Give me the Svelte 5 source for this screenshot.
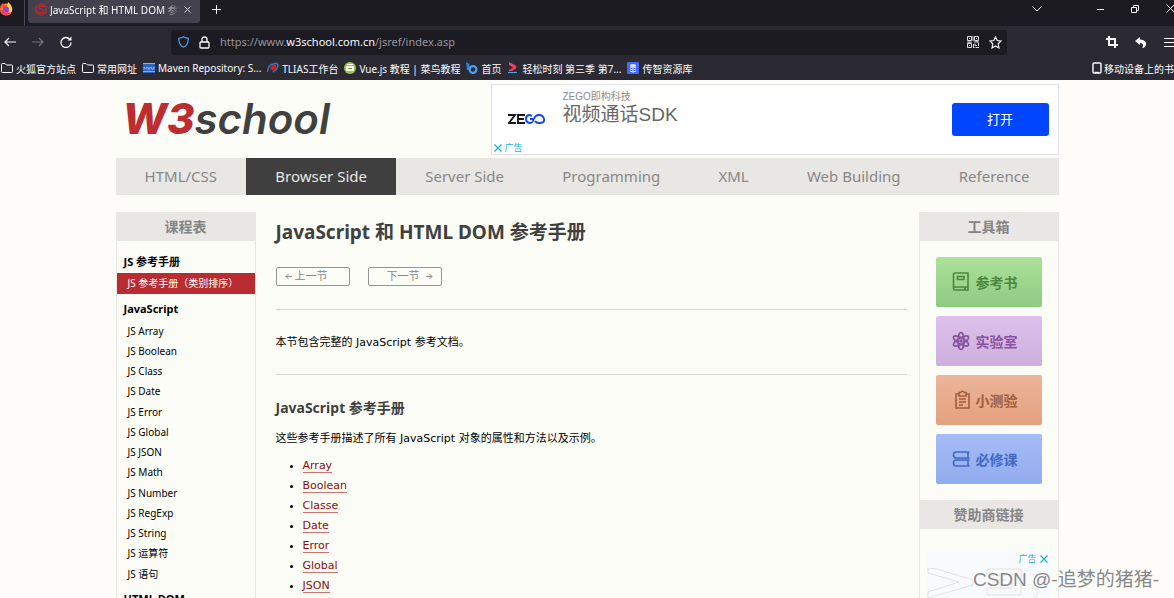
<script lang="ts">
  let url = 'https://www.w3school.com.cn/jsref/index.asp';

  const bookmarks = [
    { icon: 'folder', text: '火狐官方站点' },
    { icon: 'folder', text: '常用网址' },
    { icon: 'maven', text: 'Maven Repository: S...' },
    { icon: 'tlias', text: 'TLIAS工作台' },
    { icon: 'runoob', text: 'Vue.js 教程 | 菜鸟教程' },
    { icon: 'blue', text: '首页' },
    { icon: 'play', text: '轻松时刻 第三季 第7...' },
    { icon: 'stack', text: '传智资源库' },
  ];

  const topics = ['HTML/CSS', 'Browser Side', 'Server Side', 'Programming', 'XML', 'Web Building', 'Reference'];
  let currentTopic = 'Browser Side';

  const objects = [
    'Array', 'Boolean', 'Class', 'Date', 'Error', 'Global', 'JSON',
    'Math', 'Number', 'RegExp', 'String', '运算符', '语句',
  ];

  const references = ['Array', 'Boolean', 'Classe', 'Date', 'Error', 'Global', 'JSON'];

  const tools = [
    { kind: 'book', text: '参考书' },
    { kind: 'lab', text: '实验室' },
    { kind: 'quiz', text: '小测验' },
    { kind: 'required', text: '必修课' },
  ];
</script>

<div class="window">
  <header class="chrome">
    <div class="tab-strip">
      <div class="firefox">
        <svg width="13" height="14" viewBox="0 0 13 14">
          <circle cx="6" cy="7.5" r="6" fill="#ff8a1e" />
          <path d="M0 5 Q1 2 3 1 L4 3 Q6 2 8 4 L4 6Z" fill="#ff4b3a" />
          <path d="M8 0 Q13 4 12 9 Q11 12 8 13 Q11 8 7 4Z" fill="#ffd43c" />
          <circle cx="6" cy="7.5" r="3" fill="#8a3fe0" />
          <path d="M0 7 Q1 13 6 13.5 Q10 13.5 11 10 Q7 12 4 9Z" fill="#ff3d55" />
        </svg>
      </div>
      <div class="tab">
        <svg width="12" height="13" viewBox="0 0 12 13" fill="none" stroke="#d3222a" stroke-width="1.1">
          <path d="M6 .8 11 3.5V9.5L6 12.2 1 9.5V3.5Z" />
          <path d="M9 4.2 6 3 3.5 4.5 8.5 7.3V9L6 10.2 3 8.5" />
        </svg>
        <span class="tab-title">JavaScript 和 HTML DOM 参考手册</span>
        <button class="plain" aria-label="关闭标签页">
          <svg width="7" height="7" viewBox="0 0 7 7" stroke="#d5d4dc"><path d="M.5.5 6.5 6.5M6.5.5.5 6.5" /></svg>
        </button>
      </div>
      <button class="plain new-tab" aria-label="新标签页">
        <svg width="9" height="9" viewBox="0 0 9 9" stroke="#fbfbfe"><path d="M4.5 0V9M0 4.5H9" /></svg>
      </button>
      <div class="window-buttons">
        <button class="plain" aria-label="列出标签页">
          <svg width="10" height="6" viewBox="0 0 10 6" fill="none" stroke="#fbfbfe"><path d="M.5.5 5 5 9.5.5" /></svg>
        </button>
        <button class="plain minimize" aria-label="最小化">
          <svg width="7" height="8" viewBox="0 0 7 8" stroke="#fbfbfe"><path d="M0 4.5H7" /></svg>
        </button>
        <button class="plain" aria-label="还原">
          <svg width="8" height="8" viewBox="0 0 8 8" fill="none" stroke="#fbfbfe"><path d="M.5 2.5H5.5V7.5H.5ZM2.5 2.5V.5H7.5V5.5H5.5" /></svg>
        </button>
        <button class="plain" aria-label="关闭">
          <svg width="8" height="9" viewBox="0 0 8 9" stroke="#fbfbfe"><path d="M.5.5 8.5 8.5M8.5.5.5 8.5" /></svg>
        </button>
      </div>
    </div>

    <div class="toolbar">
      <div class="history">
        <button class="plain" aria-label="后退">
          <svg width="12" height="10" viewBox="0 0 12 10" fill="none" stroke="#fbfbfe" stroke-width="1.2"><path d="M12 5H1M5 1 1 5 5 9" /></svg>
        </button>
        <button class="plain" aria-label="前进" disabled>
          <svg width="12" height="10" viewBox="0 0 12 10" fill="none" stroke="#74737c" stroke-width="1.2"><path d="M0 5H11M7 1 11 5 7 9" /></svg>
        </button>
        <button class="plain" aria-label="刷新">
          <svg width="12" height="12" viewBox="0 0 12 12" fill="none" stroke="#fbfbfe" stroke-width="1.3"><path d="M10 3.5A5 5 0 1 0 11 6.5" /><path d="M11.5.5V4.5H7.5Z" fill="#fbfbfe" stroke="none" /></svg>
        </button>
      </div>
      <div class="url-bar">
        <svg width="11" height="12" viewBox="0 0 11 12" fill="none" stroke="#54a5e8" stroke-width="1.2">
          <path d="M5.5.8 Q7.5 2 10.2 2.3 Q10.5 9 5.5 11.2 Q.5 9 .8 2.3 Q3.5 2 5.5.8Z" />
        </svg>
        <svg width="11" height="13" viewBox="0 0 11 13" fill="none" stroke="#fbfbfe" stroke-width="1.3">
          <rect x="1" y="6" width="9" height="6" rx="1" /><path d="M3 6V3.5Q3 1 5.5 1T8 3.5V6" />
        </svg>
        <div class="address">
          <span aria-hidden="true">https://www.<b>w3school.com.cn</b>/jsref/index.asp</span>
          <input type="text" aria-label="网址" bind:value={url} />
        </div>
        <svg width="12" height="12" viewBox="0 0 12 12" fill="none" stroke="#dddce3">
          <path d="M.5.5H4.5V4.5H.5ZM7.5.5H11.5V4.5H7.5ZM.5 7.5H4.5V11.5H.5ZM2 2.5H3M9 2.5H10M2 9.5H3M6 0V5M0 6H5M7 6H12M6.5 8V12M8 7.5V9.5H10M9 11.5H12M11.5 7V10M8 11V12M2 6V7M10 5V6" />
        </svg>
        <button class="plain" aria-label="添加书签">
          <svg width="13" height="13" viewBox="0 0 13 13" fill="none" stroke="#fbfbfe" stroke-width="1.1"><path d="M6.5 1 8.2 4.6 12 5 9.2 7.8 10 12 6.5 10 3 12 3.8 7.8 1 5 4.8 4.6Z" /></svg>
        </button>
      </div>
      <div class="actions">
        <button class="plain" aria-label="截图">
          <svg width="12" height="12" viewBox="0 0 12 12" fill="none" stroke="#fbfbfe" stroke-width="2"><path d="M3 0V9H12M0 3H9V12" /></svg>
        </button>
        <button class="plain" aria-label="撤销">
          <svg width="12" height="11" viewBox="0 0 12 11" fill="#fbfbfe"><path d="M0 4 5 0V2.5Q12 3 11 8 Q10 11 7 11 Q10 7 5 5.8V8Z" /></svg>
        </button>
        <button class="plain" aria-label="菜单">
          <svg width="10" height="9" viewBox="0 0 10 9" stroke="#fbfbfe"><path d="M0 .5H10M0 4.5H10M0 8.5H10" /></svg>
        </button>
      </div>
    </div>

    <nav class="bookmarks" aria-label="书签">
      {#each bookmarks as bookmark}
        <a href="#bookmark">
          <svg width="12" height="12" viewBox="0 0 12 12" fill="none">
            {#if bookmark.icon === 'folder'}
              <path d="M.5 2.5Q.5 1.5 1.5 1.5H4L5.5 3H10.5Q11.5 3 11.5 4V9.5Q11.5 10.5 10.5 10.5H1.5Q.5 10.5.5 9.5Z" stroke="#fbfbfe" />
            {:else if bookmark.icon === 'maven'}
              <rect y="1" width="12" height="10" fill="#2a64c5" />
              <path d="M0 1.5H12M0 9.5H12" stroke="#b7ccef" stroke-width=".7" />
              <path d="M1 7.5V5L2.5 7 4 5V7.5M5 5 6 7.5 7 5M8 7.5V5L9.5 7.5 11 5V7.5" stroke="#a9c3f4" stroke-width=".7" />
            {:else if bookmark.icon === 'tlias'}
              <path d="M.5 10Q1 3 6 2Q10 .5 11 3Q11 7 6 10" stroke="#2778c4" stroke-width="1.6" />
              <ellipse cx="6.5" cy="5.5" rx="3.3" ry="2.5" fill="#e01822" transform="rotate(-35 6.5 5.5)" />
            {:else if bookmark.icon === 'runoob'}
              <circle cx="6" cy="6" r="6" fill="#96c53d" />
              <rect x="2" y="4" width="8" height="5" rx="1" fill="#fff" /><path d="M3 2.5H9" stroke="#fff" /><path d="M4 6.5H8" stroke="#7aa52f" />
            {:else if bookmark.icon === 'blue'}
              <path d="M0 0 3.5 2V8H1Z" fill="#2f7fea" /><circle cx="7" cy="7.5" r="3.4" stroke="#4ba0ff" stroke-width="2.2" />
            {:else if bookmark.icon === 'play'}
              <path d="M2 0 9.5 4 7 6 2 3Z" fill="#ff3f69" /><path d="M7 5 9.5 4.5 9 6.5 5 9H2V8Z" fill="#f23b68" /><path d="M1 10.5H10" stroke="#36aee2" stroke-width="1.2" />
            {:else}
              <rect width="12" height="12" rx="1" fill="#4268f6" />
              <ellipse cx="6" cy="3.5" rx="3" ry="1.3" fill="#fff" /><path d="M3 5Q6 7 9 5M3 7Q6 9 9 7M3 9Q6 11 9 9" stroke="#fff" />
            {/if}
          </svg>
          {bookmark.text}
        </a>
      {/each}
      <a href="#mobile" class="mobile">
        <svg width="10" height="12" viewBox="0 0 10 12" fill="none" stroke="#fbfbfe" stroke-width="1.4"><rect x="1" y="1" width="8" height="10" rx="1" /><path d="M3 10.5H7" /></svg>
        移动设备上的书签
      </a>
    </nav>
  </header>

  <div class="page">
    <div class="banner">
      <a class="logo" href="#home"><strong>W3</strong>school</a>
      <section class="ad" aria-label="广告">
        <svg width="37" height="10" viewBox="0 0 37 10" fill="none" stroke-width="1.9">
          <path d="M0 1H7L1 9H8M17 1H10V9H17M10 5H16" stroke="#15151d" />
          <path d="M24 2Q22 .9 21 1Q18 1.5 18 5T22 9Q25 9 25.5 5H22M26 5Q27 1 31 1T36 5T31 9Q28 9 27 7" stroke="#0e45ff" />
        </svg>
        <div class="ad-text">
          <small>ZEGO即构科技</small>
          <span>视频通话SDK</span>
        </div>
        <button class="open">打开</button>
        <span class="ad-mark">
          <svg width="8" height="8" viewBox="0 0 8 8" stroke="#19b2cf" stroke-width="1.3"><path d="M.5.5 7.5 7.5M7.5.5.5 7.5" /></svg>
          广告
        </span>
      </section>
    </div>

    <nav class="topics">
      {#each topics as topic}
        <a href="#topic" class:active={topic === currentTopic} on:click|preventDefault={() => (currentTopic = topic)}>{topic}</a>
      {/each}
    </nav>

    <div class="columns">
      <aside class="side">
        <h2 class="side-title">课程表</h2>
        <nav class="course">
          <h3>JS 参考手册</h3>
          <a class="current" href="#index">JS 参考手册（类别排序）</a>
          <h3>JavaScript</h3>
          <ul>
            {#each objects as name}
              <li><a href="#object">JS {name}</a></li>
            {/each}
          </ul>
          <h3>HTML DOM</h3>
        </nav>
      </aside>

      <main>
        <h1>JavaScript 和 HTML DOM 参考手册</h1>
        <div class="pager">
          <a href="#prev">
            <svg width="7" height="7" viewBox="0 0 7 7" fill="none" stroke="#888"><path d="M7 3.5H1M3.5 1 1 3.5 3.5 6" /></svg>
            上一节
          </a>
          <a href="#next" class="next">
            下一节
            <svg width="7" height="7" viewBox="0 0 7 7" fill="none" stroke="#888"><path d="M0 3.5H6M3.5 1 6 3.5 3.5 6" /></svg>
          </a>
        </div>
        <p class="intro">本节包含完整的 JavaScript 参考文档。</p>
        <h2>JavaScript 参考手册</h2>
        <p>这些参考手册描述了所有 JavaScript 对象的属性和方法以及示例。</p>
        <ul>
          {#each references as name}
            <li><a href="#reference">{name}</a></li>
          {/each}
        </ul>
      </main>

      <aside class="side">
        <h2 class="side-title">工具箱</h2>
        <div class="tools">
          {#each tools as tool}
            <a href="#tool" class={tool.kind}>
              <svg width="18" height="20" viewBox="0 0 18 20" fill="none" stroke="currentColor" stroke-width="1.6">
                {#if tool.kind === 'book'}
                  <path d="M3 1H16V18H3Q1.5 18 1.5 16V2.5Q1.5 1 3 1ZM2 15H16M5.5 4.5H12V7.5H5.5ZM13 15V18" />
                {:else if tool.kind === 'lab'}
                  <ellipse cx="9" cy="10" rx="3" ry="8.5" />
                  <ellipse cx="9" cy="10" rx="3" ry="8.5" transform="rotate(60 9 10)" />
                  <ellipse cx="9" cy="10" rx="3" ry="8.5" transform="rotate(120 9 10)" />
                  <circle cx="9" cy="10" r="1" />
                {:else if tool.kind === 'quiz'}
                  <path d="M7 4H4V18H17V4H14M7 2.5H8.5Q10.5 0 12.5 2.5H14V6H7ZM7 9H14M7 12H14M7 15H11" />
                {:else}
                  <path d="M17.5 3H4Q1.5 3 1.5 6T4 9H17.5M16 3V9M17.5 11H4Q1.5 11 1.5 14T4 17H17.5M16 11V17" />
                {/if}
              </svg>
              {tool.text}
            </a>
          {/each}
        </div>
        <h2 class="side-title">赞助商链接</h2>
        <div class="sponsor">
          <span class="sponsor-mark">
            广告
            <svg width="8" height="8" viewBox="0 0 8 8" stroke="#19b2cf" stroke-width="1.3"><path d="M.5.5 7.5 7.5M7.5.5.5 7.5" /></svg>
          </span>
          <svg width="122" height="64" viewBox="0 0 122 64" fill="none" stroke="#dfe1e4">
            <path d="M1 0V5L32 14 1 24V30L46 17V12L10 1ZM60 1H94V27H60V20H85V7H60ZM68 12H78M104 20 112 22 100 44" />
          </svg>
        </div>
      </aside>
    </div>
  </div>

  <span class="watermark">CSDN @-追梦的猪猪-</span>
</div>

<style>
  :global(body) {
    margin: 0;
    background: #fdfcf8;
  }

  .window {
    position: relative;
    height: 100vh;
    overflow: hidden;
    font-family: "Noto Sans", "Noto Sans CJK SC", sans-serif;
    font-size: 10px;
  }

  .window * {
    box-sizing: border-box;
  }

  h1, h2, h3, p, ul {
    margin: 0;
    padding: 0;
  }

  a {
    color: inherit;
    text-decoration: none;
  }

  svg {
    display: block;
    flex: none;
  }

  .plain {
    display: flex;
    padding: 0;
    border: 0;
    background: none;
  }

  /* --- Navegador --- */
  .chrome {
    height: 80px;
    background: #2b2a33;
    color: #fbfbfe;
    overflow: hidden;
  }

  .tab-strip {
    display: flex;
    align-items: flex-start;
    height: 26px;
    background: #1c1b22;
  }

  .firefox {
    width: 25px;
    height: 26px;
    padding-top: 2px;
    border-right: 1px solid #4b4a54;
  }

  .tab {
    display: flex;
    align-items: center;
    gap: 3px;
    width: 172px;
    height: 23px;
    margin-left: 3px;
    padding: 0 9px 4px 7px;
    border-radius: 0 0 3px 3px;
    background: #42414d;
  }

  .tab-title {
    flex: 1;
    overflow: hidden;
    white-space: nowrap;
    mask-image: linear-gradient(to right, #000 85%, transparent);
  }

  .new-tab {
    margin: 5px 0 0 12px;
  }

  .window-buttons {
    display: flex;
    align-items: center;
    gap: 27px;
    margin: 4px 0 0 auto;
  }

  .minimize {
    margin-left: 28px;
  }

  .toolbar {
    display: flex;
    align-items: center;
    height: 32px;
  }

  .history {
    display: flex;
    align-items: center;
    gap: 16px;
    width: 171px;
    padding-left: 4px;
  }

  .url-bar {
    display: flex;
    flex: 1;
    align-items: center;
    gap: 10px;
    height: 25px;
    padding: 0 5px 0 7px;
    border-radius: 3px;
    background: #1c1b22;
  }

  .address {
    display: grid;
    flex: 1;
    color: #96959d;
    font-size: 11px;
    line-height: 16px;
  }

  .address span,
  .address input {
    grid-area: 1 / 1;
  }

  .address b {
    color: #fbfbfe;
    font-weight: 400;
  }

  /* el texto coloreado se sustituye por el campo al enfocar */
  .address input {
    width: 100%;
    padding: 0;
    border: 0;
    outline: 0;
    background: none;
    color: transparent;
    font: inherit;
  }

  .address input:focus {
    background: #1c1b22;
    color: #fbfbfe;
  }

  .actions {
    display: flex;
    align-items: center;
    gap: 17px;
    padding-left: 99px;
  }

  .bookmarks {
    display: flex;
    align-items: center;
    gap: 6px;
    height: 20px;
    padding-left: 1px;
    white-space: nowrap;
  }

  .bookmarks a {
    display: flex;
    align-items: center;
    gap: 3px;
  }

  .bookmarks .mobile {
    gap: 2px;
    margin-left: auto;
    margin-right: -10px;
  }

  /* --- Página --- */
  .page {
    max-width: 943px;
    margin: 0 auto;
    background: #fdfdf8;
  }

  .banner {
    display: flex;
    align-items: center;
    height: 78px;
  }

  .logo {
    flex: 1;
    padding-left: 7px;
    color: #404040;
    font: italic 600 42px/56px Inter, sans-serif;
  }

  .logo strong {
    color: #bc2c30;
    font-weight: 800;
  }

  .ad {
    position: relative;
    display: flex;
    align-items: center;
    width: 568px;
    height: 71px;
    padding: 0 9px 0 16px;
    border: 1px solid #e3e4e6;
    background: #fff;
  }

  .ad-text {
    display: flex;
    flex: 1;
    flex-direction: column;
    align-self: flex-start;
    padding: 5px 0 0 18px;
    color: #666;
    font-family: "Liberation Sans", "Noto Sans CJK SC", sans-serif;
    font-size: 19px;
    line-height: 22px;
  }

  .ad-text small {
    color: #8c8c8c;
    font-size: 10px;
    line-height: 14px;
  }

  .open {
    width: 97px;
    height: 33px;
    padding: 0 0 2px;
    border: 0;
    border-radius: 3px;
    background: #0045ff;
    color: #fff;
    font: 13px "Noto Sans CJK SC", sans-serif;
  }

  .ad-mark,
  .sponsor-mark {
    display: flex;
    align-items: center;
    gap: 3px;
    color: #19b2cf;
    font-size: 9px;
    line-height: 12px;
  }

  .ad-mark {
    position: absolute;
    left: 2px;
    bottom: 0;
  }

  .topics {
    display: flex;
    background: #e8e7e3;
    color: #888;
    font-size: 15px;
    line-height: 37px;
    text-align: center;
    white-space: nowrap;
  }

  .topics a {
    flex: auto;
    padding: 0 24px;
  }

  .topics .active {
    background: #3f3f3f;
    color: #e8e7e3;
  }

  .columns {
    display: flex;
    align-items: flex-start;
  }

  .side {
    flex: none;
    width: 140px;
    margin-top: 17px;
    padding-bottom: 20px;
    border: solid #e8e7e3;
    border-width: 0 1px;
  }

  .side-title {
    background: #e8e7e3;
    color: #858585;
    font-size: 14px;
    font-weight: 700;
    line-height: 29px;
    text-align: center;
  }

  .course {
    padding-top: 11px;
  }

  .course h3 {
    padding-left: 7px;
    font-size: 11px;
    line-height: 20px;
  }

  .course .current {
    display: block;
    margin: 1px 0 5px;
    padding-left: 11px;
    background: #ba2c31;
    color: #fdfdf8;
    line-height: 21px;
  }

  .course ul {
    padding: 2px 0 5px 11px;
    list-style: none;
    line-height: 20px;
  }

  .course li:nth-child(4n) {
    padding-bottom: 1px;
  }

  main {
    flex: 1;
    padding: 23px 12px 20px 20px;
    font: 11px/20px "DejaVu Sans", "Noto Sans CJK SC", sans-serif;
  }

  h1,
  main h2 {
    color: #404040;
    font-family: "Noto Sans", "Noto Sans CJK SC", sans-serif;
  }

  h1 {
    font-size: 19px;
    line-height: 28px;
  }

  main h2 {
    margin: 23px 0 11px;
    font-size: 14px;
    line-height: 20px;
  }

  .pager {
    display: flex;
    gap: 18px;
    margin: 21px 0 23px;
  }

  .pager a {
    display: flex;
    align-items: center;
    gap: 3px;
    width: 74px;
    height: 19px;
    padding: 0 8px;
    border: 1px solid #949494;
    border-radius: 2px;
    color: #888;
  }

  .pager .next {
    gap: 6px;
    justify-content: flex-end;
  }

  .intro {
    padding: 23px 0 21px;
    border: solid #d4d4d0;
    border-width: 1px 0;
  }

  main ul {
    margin-top: 7px;
    padding-left: 27px;
  }

  main li a {
    border-bottom: 1px solid #cc7472;
    color: #900b09;
  }

  .tools {
    display: grid;
    gap: 9px;
    padding: 16px;
  }

  .tools a {
    display: flex;
    align-items: center;
    gap: 6px;
    height: 50px;
    padding-left: 16px;
    border-radius: 2px;
    font-size: 14px;
    font-weight: 700;
  }

  .book {
    background: linear-gradient(#ace299, #8fca82);
    color: #4b873c;
  }

  .lab {
    background: linear-gradient(#dec0ed, #ccafdb);
    color: #8752a1;
  }

  .quiz {
    background: linear-gradient(#ecb59b, #e4a17e);
    color: #a15e3b;
  }

  .required {
    background: linear-gradient(#a5bcf7, #92abed);
    color: #4268c5;
  }

  .sponsor {
    margin: 23px 7px 0;
    background: #f9fafc;
  }

  .sponsor-mark {
    justify-content: flex-end;
    padding: 1px 3px 3px 0;
  }

  .watermark {
    position: absolute;
    right: 15px;
    bottom: 5px;
    color: #888;
    font: 19px/26px "Liberation Sans", "Noto Sans CJK SC", sans-serif;
    text-shadow: -1px -1px 0 #fff;
  }
</style>
